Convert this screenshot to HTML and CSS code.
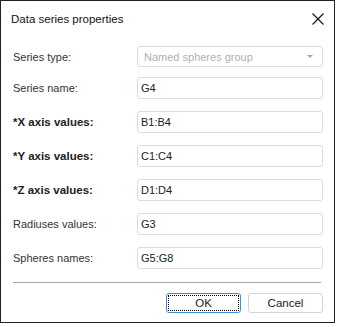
FILE: index.html
```html
<!DOCTYPE html>
<html lang="en">
<head>
  <meta charset="UTF-8" />
  <title>Data series properties</title>
  <link rel="stylesheet" href="styles.css">
</head>
<body>
  <div class="dialog">
    <div class="title-bar">
      <span class="title">Data series properties</span>
      <svg class="close" width="12" height="12" viewBox="0 0 12 12">
        <path d="M0.5 0.5 L11.5 11.5 M11.5 0.5 L0.5 11.5" stroke="#111" stroke-width="1.1" fill="none"/>
      </svg>
    </div>

    <div class="form">
      <div class="row first">
        <label>Series type:</label>
        <div class="field disabled">
          <span>Named spheres group</span>
          <span class="arrow"></span>
        </div>
      </div>
      <div class="row">
        <label>Series name:</label>
        <div class="field">G4</div>
      </div>
      <div class="row">
        <label class="req">*X axis values:</label>
        <div class="field">B1:B4</div>
      </div>
      <div class="row">
        <label class="req">*Y axis values:</label>
        <div class="field">C1:C4</div>
      </div>
      <div class="row">
        <label class="req">*Z axis values:</label>
        <div class="field">D1:D4</div>
      </div>
      <div class="row">
        <label>Radiuses values:</label>
        <div class="field">G3</div>
      </div>
      <div class="row">
        <label>Spheres names:</label>
        <div class="field">G5:G8</div>
      </div>
    </div>

    <div class="separator"></div>

    <div class="buttons">
      <button class="btn primary"><span class="focus">OK</span></button>
      <button class="btn">Cancel</button>
    </div>
  </div>
</body>
</html>
```

FILE: styles.css
```css
html, body {
  margin: 0;
  padding: 0;
  background: #fff;
  font-family: 'Liberation Sans', Arial, sans-serif;
  font-size: 11px;
  color: #333;
}

.dialog {
  width: 333px;
  height: 321px;
  border: 1px solid #222;
  box-sizing: content-box;
  margin: 0;
}

.title-bar {
  display: flex;
  align-items: center;
  justify-content: space-between;
  height: 36px;
  padding: 0 10px 0 10px;
}

.title {
  font-size: 11.5px;
  color: #111;
}

.form {
  display: flex;
  flex-direction: column;
  gap: 12px;
  padding: 9px 11px 0 12px;
}

.row {
  display: grid;
  grid-template-columns: 124px 1fr;
  align-items: center;
}

.row.first {
  margin-bottom: -2px;
}

.row label {
  color: #333;
}

.row label.req {
  font-weight: bold;
  font-size: 11.5px;
  color: #222;
}

.field {
  height: 22px;
  box-sizing: border-box;
  border: 1px solid #dcdcdc;
  border-radius: 3px;
  padding: 0 3px;
  display: flex;
  align-items: center;
  justify-content: space-between;
  color: #222;
}

.field.disabled {
  height: 21px;
  color: #b0b0b0;
  padding-left: 6px;
  padding-right: 9px;
}

.arrow {
  width: 0;
  height: 0;
  border-left: 3px solid transparent;
  border-right: 3px solid transparent;
  border-top: 3px solid #aaa;
}

.separator {
  height: 1px;
  background: #a6a6a6;
  margin: 13px 13px 0 12px;
}

.buttons {
  display: flex;
  justify-content: flex-end;
  gap: 7px;
  padding: 10px 11px 0 0;
}

.btn {
  width: 75px;
  height: 20px;
  box-sizing: border-box;
  border: 1px solid #d4d4d4;
  border-radius: 3px;
  background: #fff;
  font-family: inherit;
  font-size: 11.5px;
  color: #222;
  padding: 0;
}

.btn.primary {
  border-color: #3b8fd6;
  padding: 1px;
}

.btn .focus {
  display: flex;
  align-items: center;
  justify-content: center;
  height: 100%;
  border: 1px dotted #000;
  box-sizing: border-box;
}
```
